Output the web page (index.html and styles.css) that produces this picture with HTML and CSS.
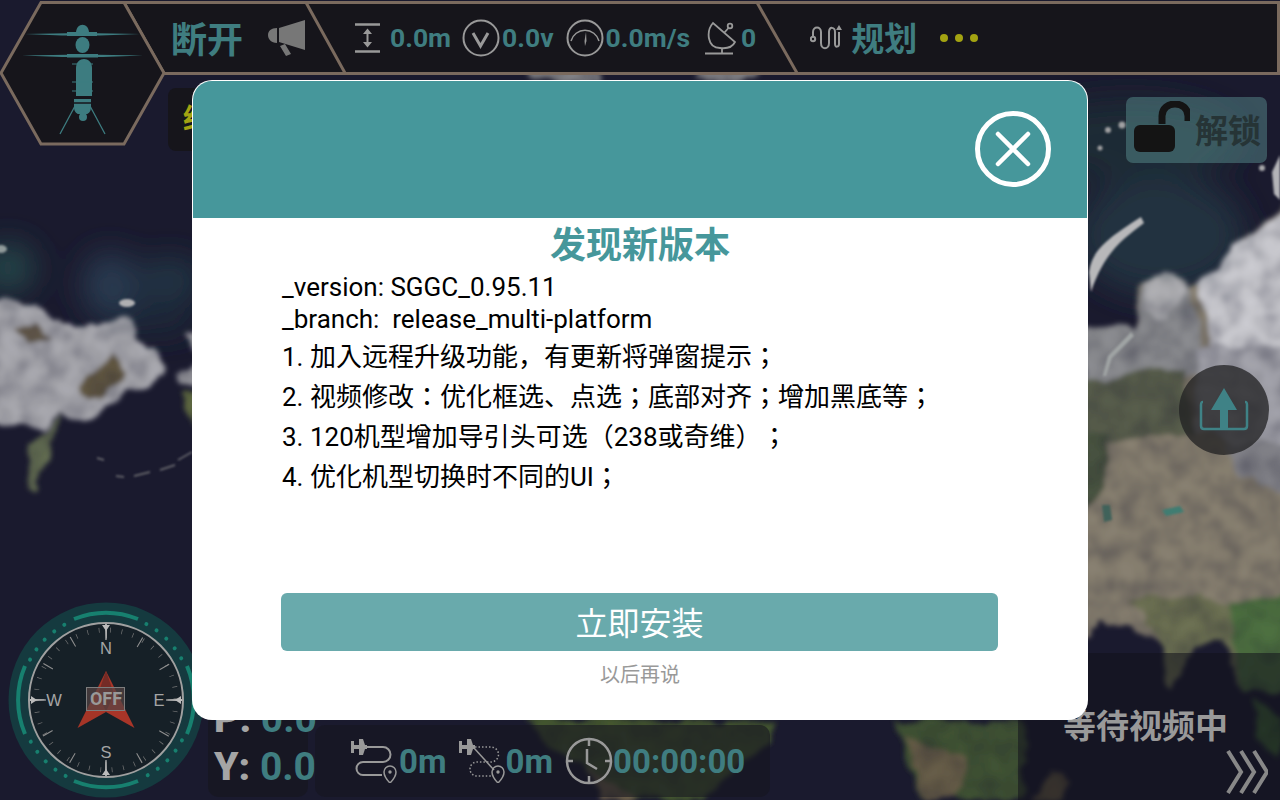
FILE: index.html
```
<!DOCTYPE html>
<html>
<head>
<meta charset="utf-8">
<title>SGGC</title>
<link rel="stylesheet" href="styles.css">
</head>
<body>
<div class="screen">

  <!-- satellite map -->
  <svg class="map" viewBox="0 0 1280 800">
    <defs>
      <filter id="land" x="-5%" y="-5%" width="110%" height="110%">
        <feTurbulence type="fractalNoise" baseFrequency="0.03" numOctaves="4" seed="7" result="warp"/>
        <feDisplacementMap in="SourceGraphic" in2="warp" scale="20" xChannelSelector="R" yChannelSelector="G" result="shape"/>
        <feTurbulence type="fractalNoise" baseFrequency="0.05" numOctaves="4" seed="3" result="grain"/>
        <feColorMatrix in="grain" type="matrix" values="0 0 0 0 1 0 0 0 0 1 0 0 0 0 1 0 0 0 1 0.25" result="mask"/>
        <feComposite in="shape" in2="mask" operator="arithmetic" k1="0.6" k2="0.5"/>
        <feGaussianBlur stdDeviation="2.500"/>
      </filter>
      <filter id="haze" x="-30%" y="-30%" width="160%" height="160%">
        <feGaussianBlur stdDeviation="16"/>
      </filter>
      <filter id="soft" x="-20%" y="-20%" width="140%" height="140%">
        <feGaussianBlur stdDeviation="1.300"/>
      </filter>
    </defs>
    <rect width="1280" height="800" fill="#1a1a2e"/>

    <g filter="url(#haze)">
      <ellipse cx="8" cy="268" rx="26" ry="24" fill="#27484c"/>
      <ellipse cx="110" cy="285" rx="26" ry="32" fill="#2c3d52"/>
      <ellipse cx="170" cy="280" rx="32" ry="20" fill="#223746"/>
      <ellipse cx="150" cy="320" rx="50" ry="12" fill="#1e2c3a"/>
      <ellipse cx="1160" cy="235" rx="85" ry="60" fill="#203040"/>
      <ellipse cx="1130" cy="140" rx="110" ry="40" fill="#1e2a36"/>
    </g>

    <g filter="url(#land)">
      <path d="M-10 298 L35 306 48 318 82 326 92 320 130 324 146 346 166 368 152 380 125 386 120 404 82 424 60 414 48 430 30 426 -10 418Z" fill="#a2a2a8"/>
      <path d="M14 326 L42 324 48 342 24 344Z" fill="#5e5547"/>
      <path d="M80 384 L115 354 128 372 104 398 85 396Z" fill="#5f5541"/>
      <path d="M62 414 L46 436 28 448 26 484 32 492 50 456 60 432Z" fill="#606a50"/>
      <path d="M183 334 L200 332 200 354 190 349Z M176 370 L200 362 200 384 182 382Z" fill="#909096"/>
      <path d="M184 392 L200 388 200 424 186 414Z" fill="#59623e"/>

      <path d="M1080 325 L1135 330 1140 285 1165 272 1185 290 1195 285 1230 255 1280 205 1290 205 1290 690 1240 690 1225 645 1190 645 1172 688 1157 645 1130 625 1100 622 1089 640 1080 640Z" fill="#827a6c"/>
      <path d="M1080 325 L1135 330 1145 285 1165 272 1185 290 1200 330 1210 375 1080 380Z" fill="#85868a"/>
      <path d="M1145 285 L1165 272 1180 290 1170 315 1148 312Z" fill="#a8a8ac"/>
      <path d="M1195 285 L1230 255 1285 205 1290 205 1290 360 1250 345 1215 345Z" fill="#c2c2c8"/>
      <path d="M1200 345 L1290 345 1290 450 1235 445 1195 430Z" fill="#9c9ca4"/>
      <path d="M1225 445 L1290 440 1290 490 1240 478Z" fill="#7c7c82"/>
      <path d="M1080 378 L1185 368 1195 432 1130 440 1080 452Z" fill="#545a4a"/>
      <path d="M1080 440 L1110 430 1105 490 1080 510Z" fill="#454f3e"/>
      <path d="M1130 600 L1200 596 1240 612 1290 600 1290 690 1240 690 1225 645 1190 645 1172 688 1157 645Z" fill="#676c50"/>
      <path d="M1230 605 L1290 590 1290 690 1240 690Z" fill="#4a6a3c"/>

      <path d="M530 720 L660 720 780 720 770 740 735 770 700 800 610 800 585 770 545 745Z" fill="#43552e"/>
      <path d="M590 770 L640 800 600 800Z" fill="#6c5e48"/>
      <path d="M895 722 L1025 720 1025 800 925 800 905 760Z" fill="#3e5030"/>
      <path d="M905 740 L970 760 950 800 925 800Z" fill="#625944"/>
      <path d="M1252 700 L1280 720 1280 760 1260 730Z" fill="#395a33"/>
      <path d="M1050 770 L1070 780 1060 800 1030 800Z" fill="#5f5540"/>
      <path d="M530 68 L600 66 600 82 530 82Z M700 62 L760 60 760 82 700 82Z" fill="#7b7b80"/>
    </g>

    <g filter="url(#soft)">
      <ellipse cx="127" cy="303" rx="8" ry="4" fill="#b0b0b2"/>
      <ellipse cx="1" cy="249" rx="6" ry="4" fill="#909a9a"/>
      <path d="M1089 272 C1092 250 1108 238 1141 217 L1144 223 C1125 238 1105 250 1091 292Z" fill="#b8b8ba"/>
      <path d="M1131 332 L1108 356 1103 376 1106 376 1112 358 1134 336Z" fill="#a0a4a4"/>
      <circle cx="1108" cy="130" r="3" fill="#a0a0a2"/>
      <circle cx="1122" cy="125" r="3.500" fill="#a0a0a2"/>
      <circle cx="1100" cy="148" r="2.500" fill="#a0a0a2"/>
      <path d="M1272 172 L1280 155 1280 200 1274 194Z" fill="#b4b4b8"/>
      <circle cx="1262" cy="168" r="3" fill="#a8a8ac"/>
      <path d="M97 458 L104 460 M116 476 L124 477 M134 476 L150 472 M160 470 L175 465 M178 460 L192 452" stroke="#5e5e66" stroke-width="2" fill="none"/>
      <path d="M1162 510 L1180 506 1184 512 1166 516Z" fill="#3f7d72"/>
      <path d="M1102 505 L1110 505 1112 520 1104 522Z" fill="#41625a"/>
    </g>
  </svg>

  <!-- top bar -->
  <svg class="top-frame" viewBox="0 0 1280 150">
    <path d="M124 2.500H1278.500V73.500H164L124 2.500Z" fill="#16151b" stroke="#7a6a5e" stroke-width="3"/>
    <path d="M41 2.500H124L164 73 124 144H41L1 73Z" fill="#16151b" stroke="#7a6a5e" stroke-width="3"/>
    <path d="M306 2.500L345 73M757 2.500L797 73" stroke="#7a6a5e" stroke-width="3" fill="none"/>
    <g fill="#3d7c80" stroke="none">
      <path d="M76 33C76 22 89 22 89 33Z"/>
      <path d="M25 34L67 33.200V32H97V33.200L140 34 100 35.500H97V36H67V35.500L62 35.500Z"/>
      <ellipse cx="82.500" cy="45" rx="7" ry="8"/>
      <path d="M22 55.500L67 54.700V54H98V54.700L143 55.500 103 57H98V57.500H67V57L62 57Z"/>
      <path d="M76 68C76 56 92 56 92 68V96H76Z"/>
      <path d="M74 99H91V107C91 113 87 114 87 114H78C78 114 74 113 74 107Z"/>
      <circle cx="83" cy="117" r="4"/>
    </g>
    <g stroke="#3d7c80" fill="none">
      <path d="M75 106L60 134M90 106L105 134" stroke-width="1.300"/>
      <path d="M72 64H93M72 82H93M72 91H93" stroke-width="1"/>
      <path d="M74 103H91" stroke="#16151b" stroke-width="1.500"/>
    </g>
  </svg>

  <div class="top-bar">
    <span class="link-state">断开</span>
    <svg class="ic-horn" viewBox="0 0 38 36"><path d="M0 15C0 11 3 8 9 8V23C3 23 0 19 0 15Z M11 8L37 0V30L11 22Z M12 26L17 24 23 34 18 36Z" fill="#777"/></svg>
    <svg class="ic-alt" viewBox="0 0 26 30"><path d="M0 1.500H25M0 28.500H25" stroke="#999" stroke-width="2.500"/><path d="M12.500 7V23" stroke="#999" stroke-width="2"/><path d="M8 11L12.500 5.500 17 11ZM8 19L12.500 24.500 17 19Z" fill="#999"/></svg>
    <span class="val val-top val-alt">0.0m</span>
    <svg class="ic-round" viewBox="0 0 38 38"><circle cx="19" cy="19" r="17.500" fill="none" stroke="#999" stroke-width="2"/><path d="M11 14L18.500 27 26 14" fill="none" stroke="#999" stroke-width="3"/></svg>
    <span class="val val-top">0.0v</span>
    <svg class="ic-round ic-speed" viewBox="0 0 38 38"><circle cx="19" cy="19" r="17.500" fill="none" stroke="#999" stroke-width="2"/><path d="M5 22A14.500 14.500 0 0 1 33 22" fill="none" stroke="#999" stroke-width="1.500"/><path d="M20 13L20.500 22 19 27 18.500 22Z" fill="#999"/></svg>
    <span class="val val-top">0.0m/s</span>
    <svg class="ic-dish" viewBox="0 0 32 36"><g fill="none" stroke="#999" stroke-width="1.800"><path d="M9 3C2 11 3 28 16 28C24 29 29 26 31 22Z"/><path d="M20 13L24.500 8"/><circle cx="26" cy="6" r="2.300"/><path d="M18 28V33M1 33.500H29"/></g></svg>
    <span class="val val-top val-sat">0</span>
    <svg class="ic-plan" viewBox="0 0 32 28"><g fill="none" stroke="#999" stroke-width="2"><circle cx="3" cy="15" r="2.200"/><path d="M3 12V8C3 2 11 2 11 8V19C11 26 19 26 19 19V8C19 2 25 3 25 8"/><path d="M25 8V20C25 24 29 23 29 20V8"/></g><path d="M26 6L29 1 32 6Z" fill="#999"/></svg>
    <span class="plan-label">规划</span>
    <div class="more"><i></i><i></i><i></i></div>
  </div>

  <!-- things on the map, under the dialog -->
  <div class="lat-box">经</div>

  <div class="unlock">
    <svg class="ic-lock" viewBox="0 0 56 52"><path d="M28 23V15C28 -1 54 -1 54 15V20" fill="none" stroke="#141414" stroke-width="7"/><rect x="0" y="24" width="41" height="27" rx="6" fill="#141414"/></svg>
    <span>解锁</span>
  </div>

  <div class="upload">
    <svg viewBox="0 0 50 46"><path d="M4 14C2 14 2 15 2 17V38C2 40 3 41 5 41H45C47 41 48 40 48 38V17C48 15 48 14 46 14" fill="none" stroke="#3f8286" stroke-width="2.500"/><path d="M25 0L38 22H29V41H21V22H12Z" fill="#3f8286"/></svg>
  </div>

  <svg class="compass" viewBox="-100 -100 200 200">
    <circle r="97.500" fill="#153a3f"/>
    <g fill="none" stroke="#17806f" stroke-width="4">
      <path d="M-32 -81A87 87 0 0 1 32 -81M-32 81A87 87 0 0 0 32 81M-81 -34A87 87 0 0 0 -81 34M81 -34A87 87 0 0 1 81 34"/>
    </g>
    <g fill="#17806f">
      <g id="dots">
        <circle cx="0" cy="-86" r="2" transform="rotate(28)"/>
        <circle cx="0" cy="-86" r="2" transform="rotate(36)"/>
        <circle cx="0" cy="-86" r="2" transform="rotate(44.500)"/>
        <circle cx="0" cy="-86" r="2" transform="rotate(53)"/>
        <circle cx="0" cy="-86" r="2" transform="rotate(61)"/>
      </g>
      <use href="#dots" transform="rotate(90)"/>
      <use href="#dots" transform="rotate(180)"/>
      <use href="#dots" transform="rotate(270)"/>
    </g>
    <circle r="77" fill="#162027" stroke="#a0a0a0" stroke-width="2"/>
    <circle r="70" fill="none" stroke="#777" stroke-width="5" stroke-dasharray="0.700 10.813" transform="rotate(-0.300)"/>
    <circle r="67" fill="none" stroke="#8e8e8e" stroke-width="11" stroke-dasharray="1.100 33.980" transform="rotate(-0.500)"/>
    <path d="M-0.900 -76H0.900L0.600 -60H-0.600Z M-0.900 76H0.900L0.600 60H-0.600Z M-76 -0.900V0.900L-60 0.600V-0.600Z M76 -0.900V0.900L60 0.600V-0.600Z" fill="#bbb"/>
    <path d="M-4 -75H4L0 -69Z M-4 75H4L0 69Z M-75 -4V4L-69 0Z M75 -4V4L69 0Z" fill="#bbb"/>
    <g class="compass-letters">
      <text x="0" y="-46">N</text>
      <text x="0" y="58">S</text>
      <text x="-52" y="6">W</text>
      <text x="53" y="6">E</text>
    </g>
    <path d="M0 -29L-28.500 28 0 12Z" fill="#a53527"/>
    <path d="M0 -29L28.500 28 0 12Z" fill="#a93528"/>
    <path d="M0 -29L-8 -6 0 12 8 -6Z" fill="#742b26"/>
    <rect x="-19.500" y="-12.500" width="38" height="23" fill="#554545" fill-opacity="0.700" stroke="#7d7d7d"/>
    <text class="compass-off" x="0" y="5">OFF</text>
  </svg>

  <div class="attitude">
    <div class="att-row"><b>P:</b> <span>0.0</span></div>
    <div class="att-row"><b>Y:</b> <span>0.0</span></div>
  </div>

  <div class="flight-bar">
    <svg class="ic-route" viewBox="0 0 46 44"><g fill="none" stroke="#999" stroke-width="2"><path d="M16 8H32A7.500 7.500 0 0 1 32 23H12A6.500 6.500 0 0 0 12 36H31"/><path d="M39 44C35 40 33 37 33 33A6 6 0 0 1 45 33C45 37 43 40 39 44Z" stroke-width="1.500"/></g><circle cx="39" cy="33" r="1.700" fill="#999"/><path d="M0 2H3V6H8V0H12L14 6H16V10H14L12 16H8V10H3V14H0Z" fill="#999"/></svg>
    <span class="val val-big">0m</span>
    <svg class="ic-route ic-route2" viewBox="0 0 46 44"><g fill="none" stroke="#999" stroke-width="1.500"><path d="M16 8H32A7.500 7.500 0 0 1 32 23H18A7 7 0 0 0 18 37H32" stroke-dasharray="1.500 2"/><path d="M15 9L35 31"/><path d="M39 44C35 40 33 37 33 33A6 6 0 0 1 45 33C45 37 43 40 39 44Z"/></g><circle cx="39" cy="33" r="1.700" fill="#999"/><path d="M0 2H3V6H8V0H12L14 6H16V10H14L12 16H8V10H3V14H0Z" fill="#999"/></svg>
    <span class="val val-big">0m</span>
    <svg class="ic-clock" viewBox="0 0 48 48"><circle cx="24" cy="24" r="22" fill="none" stroke="#999" stroke-width="2.500"/><path d="M24 2V9M24 39V46M2 24H8M40 24H46" stroke="#999" stroke-width="2.500"/><path d="M22 12V26L32 32" fill="none" stroke="#999" stroke-width="2.500"/></svg>
    <span class="val val-time">00:00:00</span>
  </div>

  <div class="video-area">
    <div class="video-wait">等待视频中</div>
    <svg class="ic-chevrons" viewBox="0 0 42 46"><path d="M2 2L15 23 2 44M15 2L28 23 15 44M28 2L41 23 28 44" fill="none" stroke="#888" stroke-width="4"/></svg>
  </div>

  <!-- update dialog -->
  <div class="dialog">
    <div class="dialog-head">
      <svg class="ic-close" viewBox="0 0 76 76"><circle cx="38" cy="38" r="35.500" fill="none" stroke="#fff" stroke-width="5"/><path d="M23 23L53 53M53 23L23 53" stroke="#fff" stroke-width="4.500" stroke-linecap="round"/></svg>
    </div>
    <div class="dialog-body">
      <h1 class="dialog-title">发现新版本</h1>
      <div class="notes">
        <p class="note-tight">_version: SGGC_0.95.11</p>
        <p class="note-tight">_branch:&nbsp; release_multi-platform</p>
        <p>1. 加入远程升级功能，有更新将弹窗提示；</p>
        <p>2. 视频修改：优化框选、点选；底部对齐；增加黑底等；</p>
        <p>3. 120机型增加导引头可选（238或奇维）；</p>
        <p>4. 优化机型切换时不同的UI；</p>
      </div>
      <div class="install">立即安装</div>
      <div class="later">以后再说</div>
    </div>
  </div>

</div>
</body>
</html>
```

FILE: styles.css
```
html, body {margin: 0; padding: 0; background: #1a1a2e;}
body {font-family: Roboto, "Noto Sans CJK JP", sans-serif; text-spacing-trim: space-all;}

.screen {position: relative; width: 1280px; height: 800px; overflow: hidden;}
.map {position: absolute; left: 0; top: 0; width: 1280px; height: 800px;}

/* top bar */
.top-frame {position: absolute; left: 0; top: 0; width: 1280px; height: 150px;}
.top-bar {position: absolute; left: 171px; top: 2px; height: 72px; display: flex; align-items: center;}
.val {color: #3f7d80; font-size: 26.500px; font-weight: 700; white-space: nowrap;}
.val-top {margin-top: -2px;}
.link-state {color: #3f7d80; font-size: 36px; font-weight: 700; width: 97px; margin-top: -2px;}
.plan-label {color: #3f7d80; font-size: 33px; font-weight: 700; margin-left: 9px; margin-top: -2px;}
.ic-horn {width: 38px; height: 36px; flex: none;}
.ic-alt {width: 26px; height: 30px; flex: none; margin-left: 49px;}
.val-alt {margin-left: 9px;}
.ic-round {width: 38px; height: 38px; flex: none; margin-left: 11px; margin-right: 2px;}
.ic-speed {margin-left: 12px; margin-right: 2px;}
.ic-dish {width: 32px; height: 36px; flex: none; margin-left: 14px;}
.val-sat {margin-left: 5px;}
.ic-plan {width: 32px; height: 28px; flex: none; margin-left: 54px;}
.more {display: flex; gap: 7px; margin-left: 23px;}
.more i {display: block; width: 8px; height: 8px; border-radius: 50%; background: #a3a312;}

/* map controls */
.lat-box {position: absolute; left: 168px; top: 88px; width: 60px; height: 63px; border-radius: 8px; background: #16151b; color: #a3a312; font-size: 28px; font-weight: 700; line-height: 63px; padding-left: 15px; box-sizing: border-box;}

.unlock {position: absolute; left: 1126px; top: 97px; width: 141px; height: 66px; border-radius: 7px; background: rgba(95, 150, 150, 0.45); display: flex; align-items: center; box-sizing: border-box; padding-left: 8px; color: #263436; font-size: 33px; font-weight: 700;}
.ic-lock {width: 56px; height: 52px; flex: none; margin-right: 5px; margin-top: -6px;}
.unlock span {white-space: nowrap; margin-top: -2px;}

.upload {position: absolute; left: 1179px; top: 365px; width: 90px; height: 90px; border-radius: 50%; background: rgba(32, 32, 34, 0.75); display: flex; align-items: center; justify-content: center;}
.upload svg {width: 50px; height: 46px; margin-top: 2px;}

.compass {position: absolute; left: 5.500px; top: 599.500px; width: 200px; height: 200px;}
.compass-letters text {fill: #a5a5a5; font-size: 16.500px; text-anchor: middle; font-family: "Liberation Sans", sans-serif;}
.compass-off {fill: #999; font-size: 18px; font-weight: 700; text-anchor: middle; font-family: Roboto, sans-serif;}

.attitude {position: absolute; left: 208px; top: 696px; width: 100px; height: 101px; box-sizing: border-box; padding-left: 6px; border-radius: 10px; background: rgba(22, 21, 27, 0.55);}
.att-row {height: 48px; line-height: 47px; font-size: 39px; font-weight: 700; color: #3f7d80; white-space: nowrap;}
.att-row b {color: #a5a5a5;}

.flight-bar {position: absolute; left: 315px; top: 725px; width: 455px; height: 72px; border-radius: 10px; background: rgba(22, 21, 32, 0.6); display: flex; align-items: center; box-sizing: border-box; padding-left: 36px;}
.ic-route {width: 46px; height: 44px; flex: none; margin-right: 2px;}
.ic-route2 {margin-left: 12px; margin-right: 1px;}
.val-big {font-size: 33px;}
.val-time {font-size: 33px;}
.ic-clock {width: 48px; height: 48px; flex: none; margin-left: 12px; margin-right: 0;}

.video-area {position: absolute; left: 1018px; top: 653px; width: 262px; height: 147px; background: rgba(18, 18, 28, 0.55);}
.video-wait {position: absolute; left: 45px; top: 47px; color: #999; font-size: 33px; font-weight: 700; white-space: nowrap;}
.ic-chevrons {position: absolute; left: 208px; top: 96px; width: 42px; height: 46px;}

/* dialog */
.dialog {position: absolute; left: 192px; top: 80px; width: 896px; height: 640px; border-radius: 20px; background: #fff; overflow: hidden;}
.dialog-head {margin: 1px 1px 0; height: 137px; background: #46979b; border-radius: 19px 19px 0 0; position: relative;}
.ic-close {position: absolute; left: 782px; top: 30px; width: 76px; height: 76px;}
.dialog-body {padding: 0 89px;}
.dialog-title {margin: 0; padding-top: 1px; text-align: center; color: #46979b; font-size: 36px; font-weight: 700; line-height: 54px;}
.notes {height: 322px; margin: -2px 0 0 1px; color: #000; font-size: 26px;}
.notes p {margin: 0; height: 40px; line-height: 40px; white-space: nowrap;}
.notes .note-tight {height: 32px; line-height: 32px;}
.notes .note-tight:nth-child(2) {height: 34px;}
.install {height: 58px; line-height: 62px; border-radius: 6px; background: #69aaac; color: #fff; font-size: 32px; text-align: center; margin: 0 1px 0 0;}
.later {margin-top: 9px; text-align: center; color: #999; font-size: 20px; line-height: 30px;}
```
